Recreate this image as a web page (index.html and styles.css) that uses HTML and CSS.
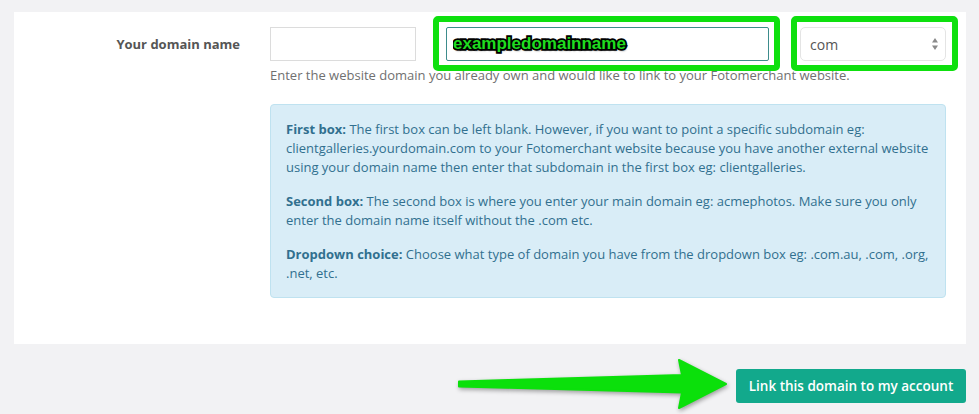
FILE: index.html
```html
<!DOCTYPE html>
<html lang="en">
<head>
<meta charset="utf-8">
<title>Link domain</title>
<link rel="stylesheet" href="styles.css">
</head>
<body>
<div class="card">
  <div class="form-row">
    <label class="label" for="sub">Your domain name</label>
    <div class="controls">
      <div class="inputs">
        <input id="sub" class="field field-sub" type="text">
        <div class="hl hl-main">
          <input class="field field-main" type="text" value="exampledomainname">
        </div>
        <div class="hl hl-tld">
          <div class="select-wrap">
            <select class="select">
              <option>com</option>
            </select>
            <svg class="select-arrows" width="8" height="14" viewBox="0 0 8 14"><path d="M4 1 L7 5.5 H1 Z M4 13 L7 8.5 H1 Z" fill="#8a8a8a"/></svg>
          </div>
        </div>
      </div>
      <p class="help">Enter the website domain you already own and would like to link to your Fotomerchant website.</p>
      <div class="info">
        <p><strong>First box:</strong> The first box can be left blank. However, if you want to point a specific subdomain eg: clientgalleries.yourdomain.com to your Fotomerchant website because you have another external website using your domain name then enter that subdomain in the first box eg: clientgalleries.</p>
        <p><strong>Second box:</strong> The second box is where you enter your main domain eg: acmephotos. Make sure you only enter the domain name itself without the .com etc.</p>
        <p><strong>Dropdown choice:</strong> Choose what type of domain you have from the dropdown box eg: .com.au, .com, .org, .net, etc.</p>
      </div>
    </div>
  </div>
</div>
<div class="footer">
  <button class="btn" type="button">Link this domain to my account</button>
</div>
<svg class="arrow" width="979" height="414" viewBox="0 0 979 414">
  <path d="M459 381.5 L682 375 L679 360 L726 384 L679 408 L682 392.5 L459 386.5 Z" fill="#0be00b" stroke="#0be00b" stroke-width="2" stroke-linejoin="round"/>
</svg>
</body>
</html>
```

FILE: styles.css
```css
* { box-sizing: border-box; }

body {
  margin: 0;
  padding-top: 12px;
  background: #f2f2f4;
  font-family: "Open Sans", "Liberation Sans", sans-serif;
  font-size: 13px;
  color: #555;
  position: relative;
  min-height: 414px;
}

.card {
  margin: 0 13px 0 14px;
  background: #fff;
  padding: 15px 0 46px 0;
}

.form-row {
  display: grid;
  grid-template-columns: 226px 676px;
  column-gap: 30px;
}

.label {
  text-align: right;
  font-weight: 700;
  line-height: 34px;
  color: #555;
}

.inputs {
  display: flex;
  align-items: flex-start;
}

.field {
  height: 34px;
  border: 1px solid #dcdcdc;
  background: #fff;
  padding: 0 8px;
  font-family: inherit;
  font-size: 13px;
  color: #555;
  outline: none;
  margin: 0;
}

.field-sub { width: 146px; }

.hl { position: relative; }

.hl::after {
  content: "";
  position: absolute;
  border: 6px solid #0ee00e;
  border-radius: 5px;
  pointer-events: none;
}

.hl-main { margin-left: 30px; }
.hl-main::after { left: -13px; right: -11px; top: -11px; bottom: -10px; }

.hl-tld { margin-left: 31px; }
.hl-tld::after { left: -9px; right: -12px; top: -11px; bottom: -10px; }

.field-main {
  width: 323px;
  border-color: #3d8c8c;
  border-radius: 2px;
  padding-left: 6px;
  font-family: "Liberation Sans", Arial, sans-serif;
  font-weight: 700;
  font-size: 17px;
  color: #1fdc1f;
  -webkit-text-stroke: 3.5px #000;
  paint-order: stroke fill;
  text-shadow: 1px 2px 2px rgba(0,0,0,.45);
}

.select-wrap {
  position: relative;
  width: 146px;
  height: 34px;
}

.select {
  appearance: none;
  -webkit-appearance: none;
  width: 146px;
  height: 34px;
  border: 1px solid #e4e4e4;
  border-radius: 5px;
  background: #fff;
  padding: 0 9px;
  font-family: inherit;
  font-size: 14px;
  color: #555;
  margin: 0;
}

.select-arrows {
  position: absolute;
  right: 7px;
  top: 10px;
  pointer-events: none;
}

.help {
  margin: 4px 0 0;
  line-height: 20px;
  color: #707070;
}

.info {
  margin-top: 19px;
  background: #d9edf7;
  border: 1px solid #bfe2f0;
  border-radius: 4px;
  padding: 15px 10px 14px 15px;
  color: #31708f;
  line-height: 19px;
}

.info p { margin: 0 0 15px; }
.info p:last-child { margin-bottom: 0; }
.info strong { font-weight: 700; }

.footer {
  display: flex;
  justify-content: flex-end;
  margin: 25px 13px 0 0;
}

.btn {
  width: 230px;
  height: 34px;
  padding: 0;
  border: none;
  border-radius: 3px;
  background: #12a98c;
  color: #fff;
  font-family: "Open Sans", "Liberation Sans", sans-serif;
  font-weight: 600;
  font-size: 13.5px;
  cursor: pointer;
}

.arrow {
  position: absolute;
  left: 0;
  top: 0;
  pointer-events: none;
  filter: drop-shadow(1px 2px 2px rgba(0,0,0,.35));
}
```
